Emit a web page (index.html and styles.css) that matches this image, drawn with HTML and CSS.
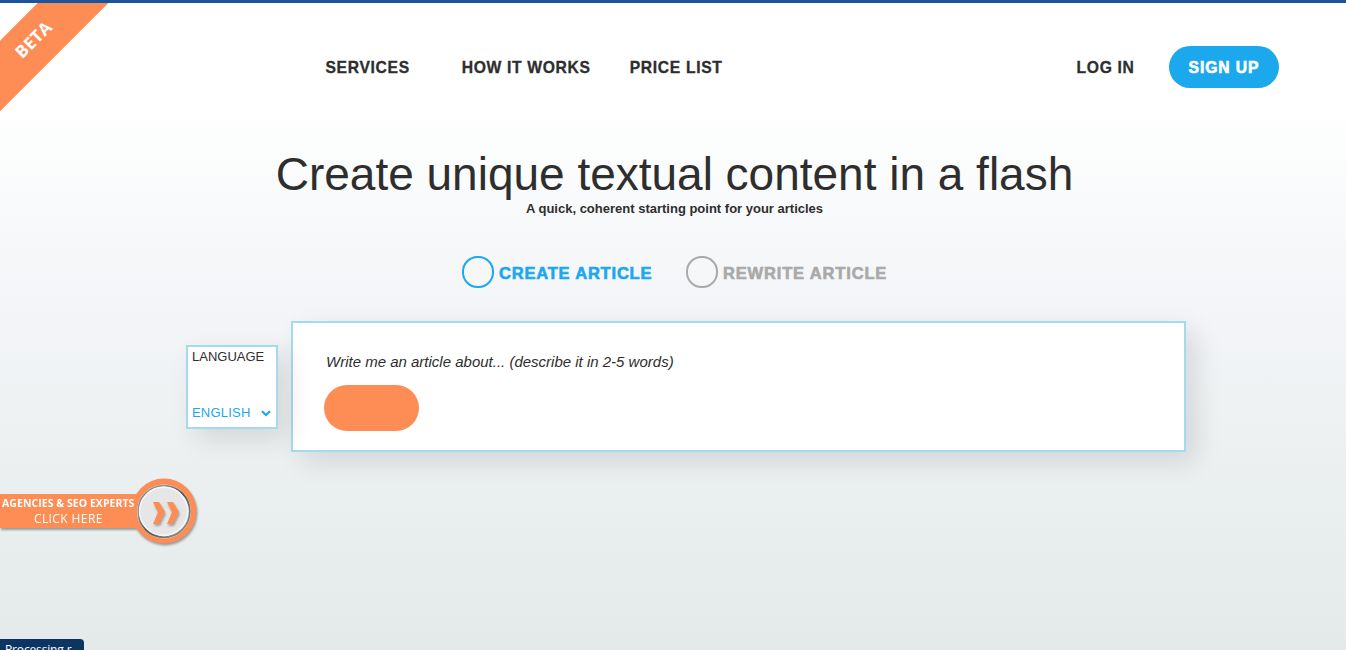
FILE: index.html
```html
<!DOCTYPE html>
<html lang="en">
<head>
<meta charset="utf-8">
<title>Create unique textual content</title>
<link rel="stylesheet" href="styles.css">
</head>
<body>
<header class="header">
  <nav class="nav">
    <a class="services">SERVICES</a><a class="how">HOW IT WORKS</a><a>PRICE LIST</a>
  </nav>
  <div class="account"><a class="login">LOG IN</a><a class="signup">SIGN UP</a></div>
</header>
<main>
  <h1 class="title">Create unique textual content in a flash</h1>
  <p class="subtitle">A quick, coherent starting point for your articles</p>
  <div class="modes">
    <div class="mode active"><span class="radio"></span><span class="mode-label create">CREATE ARTICLE</span></div>
    <div class="mode"><span class="radio"></span><span class="mode-label">REWRITE ARTICLE</span></div>
  </div>
  <div class="workspace">
    <section class="language">
      <span>LANGUAGE</span>
      <div class="select"><span>ENGLISH</span>
        <svg class="chevron" width="10" height="7" viewBox="0 0 10 7"><path d="M1 1.2 5 5 9 1.2" fill="none" stroke="#1ba8ed" stroke-width="2.2"/></svg>
      </div>
    </section>
    <section class="composer">
      <div class="prompt">Write me an article about... (describe it in 2-5 words)</div>
      <button class="go" aria-label="Create"></button>
    </section>
  </div>
</main>
<div class="ribbon"><span>BETA</span></div>
<a class="agencies">
  <svg class="agency-disc" width="72" height="74" viewBox="0 0 72 74">
    <defs><linearGradient id="rim" x1="0" y1="0" x2="1" y2="1"><stop offset="0" stop-color="#777"/><stop offset=".25" stop-color="#999"/><stop offset=".5" stop-color="#555"/><stop offset=".75" stop-color="#777"/><stop offset="1" stop-color="#999"/></linearGradient></defs>
    <circle cx="34" cy="36" r="32.5" fill="#fe8c55"/>
    <circle cx="34" cy="36.5" r="27" fill="#f4f4f4"/>
    <circle cx="34" cy="36.5" r="25.8" fill="#e6e6e6" stroke="url(#rim)" stroke-width="1.8"/>
    <circle cx="33.6" cy="36.2" r="24" fill="#e6e6e6" stroke="#f6f6f6" stroke-width="1.4"/>
    <g class="arrows" fill="#fe8c55"><path d="M23 27h6l6 10-6 12h-6l5-12z"/><path d="M37 27h6l6 10-6 12h-6l5-12z"/></g>
  </svg>
  <span class="agency-copy"><b>AGENCIES &amp; SEO EXPERTS</b><span>CLICK HERE</span></span>
</a>
<div class="status">Processing r...</div>
</body>
</html>
```

FILE: styles.css
```css
* { box-sizing: border-box; }
body {
  margin: 0;
  height: 650px;
  overflow: hidden;
  position: relative;
  border-top: 3px solid #1c549b;
  background: linear-gradient(#fff 0, #fff 105px, #fbfcfc 160px, #f4f5f8 300px, #eef2f3 400px, #e4e9ea 650px);
  color: #2e2e2e;
  font-family: "Liberation Sans", Arial, sans-serif;
}
.header {
  display: flex;
  justify-content: space-between;
  align-items: center;
  height: 128px;
  padding: 0 67px 0 325.5px;
  font-size: 15.7px;
  font-weight: 700;
  letter-spacing: .65px;
  -webkit-text-stroke: .3px currentColor;
}
.nav, .account { display: flex; align-items: center; }
.nav, .login { padding-top: 2px; }
.services { margin-right: 52px; }
.how { margin-right: 39px; }
.account { gap: 34.5px; }
.signup {
  width: 110px;
  height: 42px;
  border-radius: 21px;
  background: #1ba8ed;
  color: #fff;
  line-height: 44px;
  text-align: center;
  letter-spacing: .9px;
  -webkit-text-stroke: .6px #fff;
}
.title {
  margin: 18px 0 0;
  padding-left: 3px;
  font-size: 46px;
  font-weight: 400;
  line-height: 51px;
  letter-spacing: -.01px;
  text-align: center;
}
.subtitle {
  margin: 0;
  padding-left: 3px;
  font-size: 13px;
  font-weight: 700;
  line-height: 17px;
  text-align: center;
}
.modes { display: flex; gap: 34px; padding: 39px 0 0 462px; }
.mode { display: flex; align-items: center; gap: 5px; height: 32px; color: #a9a9a9; }
.active { color: #1ba8ed; }
.radio { width: 32px; height: 32px; border: 2px solid currentColor; border-radius: 15.5px; }
.mode-label { font-size: 16.5px; font-weight: 700; letter-spacing: .84px; line-height: 32px; padding-top: 1px; -webkit-text-stroke: .6px currentColor; }
.create { letter-spacing: .8px; width: 153px; white-space: nowrap; }
.workspace { display: flex; align-items: flex-start; gap: 13px; padding: 33px 0 0 186px; }
.language, .composer { border: 2px solid #a5daee; background: #fff; box-shadow: 10px 10px 25px rgba(0, 0, 0, .11); }
.language {
  z-index: 1;
  width: 92px;
  height: 84px;
  margin-top: 24px;
  padding: 1px 5px 6px 4px;
  display: flex;
  flex-direction: column;
  justify-content: space-between;
  font-size: 13px;
  line-height: 17px;
}
.select { display: flex; align-items: center; justify-content: space-between; color: #1ba8ed; letter-spacing: .2px; }
.chevron { margin-top: 1px; }
.composer { width: 895px; height: 131px; padding: 29px 31px; }
.prompt { padding-left: 2px; font-size: 15px; font-style: italic; line-height: 20px; }
.go { display: block; width: 95px; height: 46px; margin-top: 13px; border: 0; border-radius: 23px; background: #fe8c55; }
.ribbon {
  position: absolute;
  left: -75px;
  top: 13px;
  width: 220px;
  height: 50px;
  background: #fe8c55;
  transform: rotate(-45deg);
  color: #fff;
  font: 700 17px/46px "Open Sans", sans-serif;
  text-align: center;
  letter-spacing: .3px;
}
.agencies { position: absolute; left: 0; top: 472px; width: 205px; height: 74px; filter: drop-shadow(1px 2px 1px rgba(0, 0, 0, .35)); }
.agency-copy {
  position: absolute;
  top: 19px;
  left: 0;
  width: 136px;
  height: 34px;
  padding: 1px 0 0 2px;
  background: #fe8c55;
  color: #fff;
  font: 12px/16px "Open Sans", sans-serif;
  display: flex;
  flex-direction: column;
}
.agency-copy b { font-size: 10.5px; letter-spacing: .05px; white-space: nowrap; }
.agency-copy span { padding-left: 32px; letter-spacing: .4px; }
.agency-disc { position: absolute; left: 130px; top: 0; }
.arrows { filter: drop-shadow(1px 2px 1px rgba(0, 0, 0, .3)); }
.status {
  position: absolute;
  left: 0;
  bottom: -13px;
  width: 84px;
  height: 24px;
  padding-left: 5px;
  border-radius: 0 4px 0 0;
  background: #0c3563;
  color: #fff;
  font: 12px/22px "Open Sans", sans-serif;
  letter-spacing: -.15px;
}
```
